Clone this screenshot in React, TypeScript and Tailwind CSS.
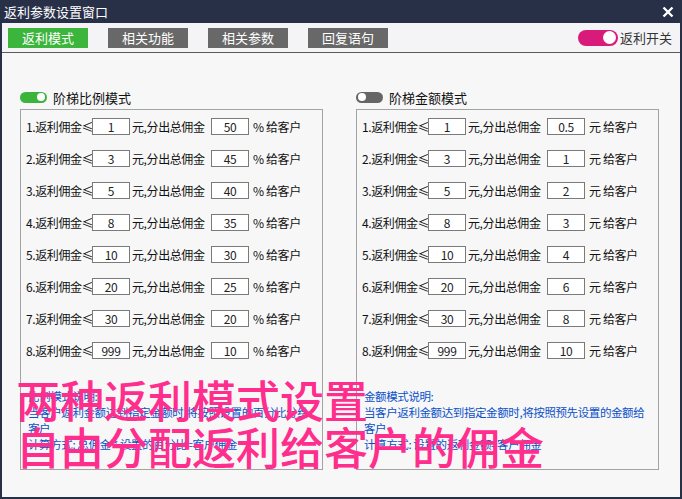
import React from 'react'

const font = { fontFamily: '"Noto Sans CJK SC", "Noto Sans", sans-serif' }

const ratioRows = [
    ['1', '50'],
    ['3', '45'],
    ['5', '40'],
    ['8', '35'],
    ['10', '30'],
    ['20', '25'],
    ['30', '20'],
    ['999', '10'],
]

const amountRows = [
    ['1', '0.5'],
    ['3', '1'],
    ['5', '2'],
    ['8', '3'],
    ['10', '4'],
    ['20', '6'],
    ['30', '8'],
    ['999', '10'],
]

function Field({ value }: { value: string }) {
    return (
        <div className="w-[38px] h-[17px] shrink-0 border border-[#7a7a7a] bg-white flex items-center justify-center text-[12px] text-[#222] leading-none">
            {value}
        </div>
    )
}

function Panel({
    on,
    title,
    rows,
    unit,
    desc,
}: {
    on: boolean
    title: string
    rows: string[][]
    unit: string
    desc: string[]
}) {
    return (
        <div className="flex flex-col">
            <div className="flex items-center gap-[6px] h-[12px]">
                <div
                    className={
                        on
                            ? 'w-[27px] h-[11px] rounded-full bg-[#3cb43c] flex items-center justify-end pr-[2px]'
                            : 'w-[27px] h-[11px] rounded-full bg-[#666666] flex items-center justify-start pl-[2px]'
                    }
                >
                    <div className="w-[8px] h-[8px] rounded-full bg-white" />
                </div>
                <span className="text-[13px] text-[#111] leading-none">{title}</span>
            </div>
            <div className="mt-[6px] h-[361px] border border-[#a3a3a3] pt-[8px] pl-[5px] flex flex-col">
                <div className="flex flex-col gap-[15px]">
                    {rows.map((r, i) => (
                        <div key={i} className="flex items-center h-[17px] text-[12px] tracking-[-0.4px] text-[#111] leading-none whitespace-nowrap">
                            <span className="w-[66px] shrink-0">{i + 1}.返利佣金≤</span>
                            <Field value={r[0]} />
                            <span className="w-[81px] shrink-0 pl-[2px]">元,分出总佣金</span>
                            <Field value={r[1]} />
                            <span className="pl-[4px]">{unit} 给客户</span>
                        </div>
                    ))}
                </div>
                <div className="mt-[29px] pl-[2px] text-[11.5px] tracking-[-0.4px] leading-[16px] text-[#0a50c8] whitespace-nowrap">
                    {desc.map((d, i) => (
                        <div key={i}>{d}</div>
                    ))}
                </div>
            </div>
        </div>
    )
}

export default function App() {
    return (
        <div style={font} className="w-[682px] h-[499px] bg-[#283048] flex flex-col relative overflow-hidden">
            <div className="h-[23px] flex items-center justify-between px-[4px] text-white">
                <span className="text-[13px] leading-none">返利参数设置窗口</span>
                <svg width="12" height="12" viewBox="0 0 12 12" className="mr-[4px]">
                    <path d="M1.5 1.5 L10.5 10.5 M10.5 1.5 L1.5 10.5" stroke="white" strokeWidth="2.4" />
                </svg>
            </div>
            <div className="flex-1 mx-[2px] mb-[2px] flex flex-col bg-[#f7f7f7]">
                <div className="h-[30px] bg-[#f4f4f6] border-b border-[#5a5a5a] flex items-center pl-[6px] pr-[8px]">
                    <div className="w-[80px] h-[20px] bg-[#3bb53b] text-white text-[13px] flex items-center justify-center">返利模式</div>
                    <div className="ml-[20px] w-[80px] h-[20px] bg-[#686868] text-white text-[13px] flex items-center justify-center">相关功能</div>
                    <div className="ml-[20px] w-[80px] h-[20px] bg-[#686868] text-white text-[13px] flex items-center justify-center">相关参数</div>
                    <div className="ml-[20px] w-[80px] h-[20px] bg-[#686868] text-white text-[13px] flex items-center justify-center">回复语句</div>
                    <div className="ml-auto flex items-center">
                        <div className="w-[40px] h-[16px] rounded-full bg-[#d81b7a] flex items-center justify-end pr-[2px]">
                            <div className="w-[13px] h-[13px] rounded-full bg-white" />
                        </div>
                        <span className="ml-[2px] text-[13px] text-[#333]">返利开关</span>
                    </div>
                </div>
                <div className="flex-1 flex pl-[18px] pt-[38px] gap-[33px]">
                    <div className="w-[303px]">
                        <Panel
                            on
                            title="阶梯比例模式"
                            rows={ratioRows}
                            unit="%"
                            desc={[
                                '比例模式说明:',
                                '当客户返利金额达到指定金额时,将按照设置的百分比分给',
                                '客户',
                                '计算方式: 总佣金 * 设置的百分比=客户佣金',
                            ]}
                        />
                    </div>
                    <div className="w-[303px]">
                        <Panel
                            on={false}
                            title="阶梯金额模式"
                            rows={amountRows}
                            unit="元"
                            desc={[
                                '金额模式说明:',
                                '当客户返利金额达到指定金额时,将按照预先设置的金额给',
                                '客户',
                                '计算方式: 设置的返利金额=客户佣金',
                            ]}
                        />
                    </div>
                </div>
            </div>
            <div className="absolute left-[16px] top-[376px] text-[#ff2d8c] text-[44px] leading-[47px] font-medium whitespace-nowrap">
                <div>两种返利模式设置</div>
                <div>自由分配返利给客户的佣金</div>
            </div>
        </div>
    )
}
